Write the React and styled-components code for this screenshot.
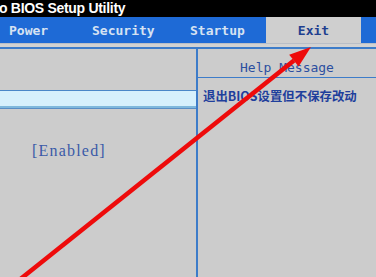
import React from "react";
import styled, { createGlobalStyle } from "styled-components";

const Global = createGlobalStyle`
  html, body { margin: 0; padding: 0; background: #cccccc; overflow: hidden; }
  #root { width: 376px; height: 277px; }
`;

const Screen = styled.div`
  position: relative;
  width: 376px;
  height: 277px;
  overflow: hidden;
  background: #cccccc;
  display: flex;
  flex-direction: column;
`;

const TitleBar = styled.div`
  height: 17px;
  background: #000;
  color: #fff;
  font-family: "Liberation Sans", Arial, sans-serif;
  font-weight: bold;
  font-size: 14px;
  line-height: 17px;
  white-space: nowrap;
  letter-spacing: -0.3px;
  span { margin-left: -1px; }
`;

const TabBar = styled.div`
  height: 26px;
  background: #1e6ad6;
  display: flex;
  align-items: stretch;
  font-family: "DejaVu Sans Mono", "Liberation Mono", monospace;
  font-weight: bold;
  font-size: 13px;
`;

const Tab = styled.div`
  width: ${(p) => p.$w}px;
  padding-left: ${(p) => (p.$active ? 0 : p.$pad)}px;
  box-sizing: border-box;
  display: flex;
  align-items: center;
  justify-content: ${(p) => (p.$active ? "center" : "flex-start")};
  color: ${(p) => (p.$active ? "#1f3f8f" : "#d6e2f2")};
  background: ${(p) => (p.$active ? "#cfcfcf" : "transparent")};
  padding-top: 1px;
`;

const Gap = styled.div`
  height: 4px;
  background: #d2d2d2;
  border-top: 1px solid #b9bec6;
  box-sizing: border-box;
`;

const Panels = styled.div`
  flex: 1;
  display: flex;
  border-top: 2px solid #3d7cc9;
`;

const LeftPanel = styled.div`
  width: 196px;
  display: flex;
  flex-direction: column;
`;

const Divider = styled.div`
  width: 2px;
  background: #3d7cc9;
`;

const RightPanel = styled.div`
  flex: 1;
  display: flex;
  flex-direction: column;
`;

const HighlightRow = styled.div`
  margin-top: 41px;
  height: 15px;
  background: #d6f0fc;
  border-top: 1px solid #4a87c8;
  border-bottom: 2px solid #7fb8dc;
  box-shadow: 0 1px 0 #5a8ec4;
`;

const ValueRow = styled.div`
  margin-top: 34px;
  padding-left: 32px;
  font-family: "Liberation Serif", "Times New Roman", serif;
  font-size: 16px;
  letter-spacing: 1.2px;
  color: #3a5aa8;
  line-height: 18px;
`;

const HelpHeader = styled.div`
  height: 29px;
  border-bottom: 1px solid #3d7cc9;
  display: flex;
  align-items: center;
  justify-content: center;
  font-family: "DejaVu Sans Mono", "Liberation Mono", monospace;
  font-size: 13px;
  color: #2b4fa0;
  padding-top: 9px;
  box-sizing: border-box;
`;

const HelpText = styled.div`
  padding: 10px 0 0 5px;
  font-family: "Noto Sans CJK SC", "Noto Sans", sans-serif;
  font-weight: bold;
  font-size: 12.4px;
  color: #1f3f9c;
  line-height: 16px;
  white-space: nowrap;
`;

const ArrowOverlay = styled.svg`
  position: absolute;
  left: 0;
  top: 0;
  pointer-events: none;
`;

const tabs = [
  { label: "Power", w: 83, pad: 9 },
  { label: "Security", w: 98, pad: 9 },
  { label: "Startup", w: 85, pad: 9 },
  { label: "Exit", w: 95, active: true },
];

export default function App() {
  return (
    <>
      <Global />
      <Screen>
        <TitleBar>
          <span>o BIOS Setup Utility</span>
        </TitleBar>
        <TabBar>
          {tabs.map((t) => (
            <Tab key={t.label} $w={t.w} $pad={t.pad} $active={t.active}>
              {t.label}
            </Tab>
          ))}
        </TabBar>
        <Gap />
        <Panels>
          <LeftPanel>
            <HighlightRow />
            <ValueRow>[Enabled]</ValueRow>
          </LeftPanel>
          <Divider />
          <RightPanel>
            <HelpHeader>Help Message</HelpHeader>
            <HelpText>退出BIOS设置但不保存改动</HelpText>
          </RightPanel>
        </Panels>
        <ArrowOverlay width="376" height="277" viewBox="0 0 376 277">
          <line
            x1="18"
            y1="281"
            x2="294"
            y2="60.5"
            stroke="#ee0b0b"
            strokeWidth="4.5"
          />
          <polygon points="311,47 298.6,66.4 289.2,54.8" fill="#ee0b0b" />
        </ArrowOverlay>
      </Screen>
    </>
  );
}
